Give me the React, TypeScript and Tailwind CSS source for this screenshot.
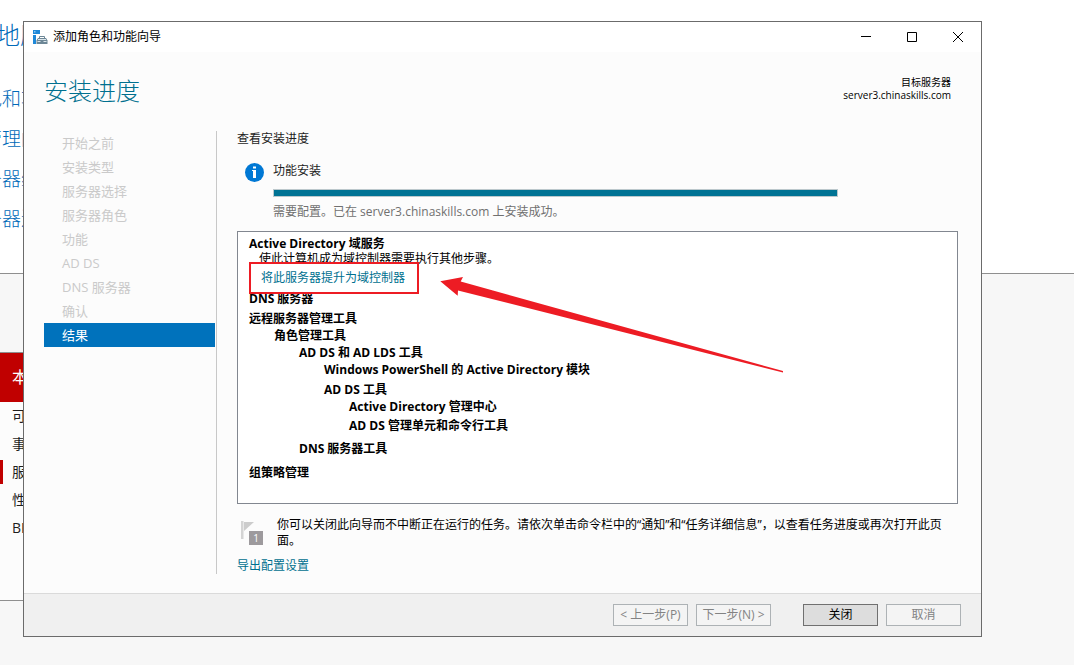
import React from "react";

const steps = [
  "开始之前",
  "安装类型",
  "服务器选择",
  "服务器角色",
  "功能",
  "AD DS",
  "DNS 服务器",
  "确认",
  "结果",
];

const currentStep = "结果";

const features = [
  { name: "DNS 服务器", className: "mt-1.5" },
  { name: "远程服务器管理工具", className: "mt-[5px]" },
  { name: "角色管理工具", className: "mt-0.5 pl-[25px]" },
  { name: "AD DS 和 AD LDS 工具", className: "mt-0.5 pl-[50px]" },
  { name: "Windows PowerShell 的 Active Directory 模块", className: "mt-0.5 pl-[75px]" },
  { name: "AD DS 工具", className: "mt-[5px] pl-[75px]" },
  { name: "Active Directory 管理中心", className: "mt-0.5 pl-[100px]" },
  { name: "AD DS 管理单元和命令行工具", className: "mt-1 pl-[100px]" },
  { name: "DNS 服务器工具", className: "mt-2 pl-[50px]" },
  { name: "组策略管理", className: "mt-[9px]" },
];

const quickStart = ["色和功能", "管理的", "务器组", "务器连"];

const tileRows = [
  { name: "可管理性", active: false },
  { name: "事件", active: false },
  { name: "服务", active: true },
  { name: "性能", active: false },
  { name: "BPA 结果", active: false },
];

function AppIcon() {
  return (
    <svg width="15" height="15" viewBox="0 0 15 15" aria-hidden="true">
      <path d="M0 0h7v4H0zM0 5h3v9H0z" fill="#1e88d8" />
      <path d="M1 1h1.500v1.500H1z" fill="#8cc8f2" />
      <path d="M6.500 8.500v-2h5v2" fill="none" stroke="#6d8796" />
      <path d="M5 8h8l1.500 2.500V14H3.500v-3.500z" fill="#6d8796" />
      <path d="M5 9.500h8M4.500 11.500h3M10.500 11.500h3" stroke="#dce6ec" />
    </svg>
  );
}

function InfoIcon() {
  return (
    <svg width="19" height="19" viewBox="0 0 19 19" aria-hidden="true">
      <circle cx="9.500" cy="9.500" r="9.500" fill="#0078d4" />
      <path d="M8 3.500h3v2H8zM7 7h4v8H8V8H7z" fill="#fff" />
    </svg>
  );
}

function FlagIcon() {
  return (
    <span className="relative mt-[3px] block h-[27px] w-[22px]">
      <svg width="13" height="19" viewBox="0 0 13 19" aria-hidden="true">
        <path d="M0 1h2.500v18H0z" fill="#d4d4d4" />
        <path d="M3 2h10L3 11z" fill="#cccccc" />
      </svg>
      <span className="absolute right-0 bottom-0.5 h-3.5 w-3.5 bg-[#9d9a9d] text-center text-[10px] leading-[14px] text-white">
        1
      </span>
    </span>
  );
}

function TitleBar() {
  const control = "flex h-[30px] w-[46px] items-center justify-center";
  return (
    <header className="flex h-[30px] items-center bg-white pl-[9px]">
      <AppIcon />
      <span className="ml-[5px] text-black">添加角色和功能向导</span>
      <div className="ml-auto flex">
        <button className={control} aria-label="最小化">
          <svg width="10" height="10" viewBox="0 0 10 10">
            <path d="M0 4.500h10" stroke="#000" />
          </svg>
        </button>
        <button className={control} aria-label="最大化">
          <svg width="10" height="10" viewBox="0 0 10 10">
            <path d="M.5.500h9v9h-9z" fill="none" stroke="#000" />
          </svg>
        </button>
        <button className={control} aria-label="关闭窗口">
          <svg width="10" height="10" viewBox="0 0 10 10">
            <path d="M0 0l10 10M10 0L0 10" stroke="#000" />
          </svg>
        </button>
      </div>
    </header>
  );
}

function ServerManager() {
  return (
    <div className="flex min-h-screen flex-col bg-[#f7f7f7]">
      <div className="h-[274px] border-b border-[#8f8f8f] bg-white pt-[19px] text-[19px] text-[#0069b8]">
        <p className="-ml-1 text-2xl leading-8 font-light">地服</p>
        <ul className="mt-7 -ml-[17px]">
          {quickStart.map((item) => (
            <li key={item} className="h-10 leading-10 font-light">
              {item}
            </li>
          ))}
        </ul>
      </div>
      <section className="mt-[78px] h-[249px] w-52 border-y border-[#8f8f8f] bg-[#fcfcfc]">
        <h2 className="bg-[#c00000] pl-3 text-base leading-[49px] text-white">本地服务器</h2>
        <ul>
          {tileRows.map((row) => (
            <li key={row.name} className="flex h-7 items-center text-sm text-[#1e1e1e]">
              <span className={row.active ? "h-6 w-[3px] bg-[#c00000]" : "w-[3px]"} />
              <span className="ml-[9px]">{row.name}</span>
            </li>
          ))}
        </ul>
      </section>
    </div>
  );
}

function ResultPanel() {
  return (
    <div className="relative mt-[11px] flex-1 border border-[#828790] bg-white pt-1 pl-[11px] leading-[15px] text-black">
      <h3 className="font-bold">Active Directory 域服务</h3>
      <p className="pl-2.5">使此计算机成为域控制器需要执行其他步骤。</p>
      <a href="#promote" className="mt-1 ml-3 block w-fit text-[#00708f]">
        将此服务器提升为域控制器
      </a>
      <ul className="font-bold">
        {features.map((feature) => (
          <li key={feature.name} className={feature.className}>
            {feature.name}
          </li>
        ))}
      </ul>
      {/* highlight around the promote link, with the arrow pointing at it */}
      <div className="absolute top-[30px] left-[11px] h-8 w-[170px] border-2 border-[#ed1c24]" />
      <svg
        className="absolute top-10 left-[200px]"
        width="348"
        height="104"
        viewBox="0 0 348 104"
        aria-hidden="true"
      >
        <path d="M2.300 9.300L25 5l-2.300 4.500L345 99v1.500L20 18.500l-.3 5.200z" fill="#ed1c24" />
      </svg>
    </div>
  );
}

function Footer() {
  const disabled = "h-[22px] w-[75px] border border-[#adb2b5] bg-[#f4f4f4] text-[#838383]";
  return (
    <footer className="flex h-[43px] items-center justify-end gap-2 border-t border-[#dadada] bg-[#f0f0f0] pr-5">
      <button className={disabled} disabled>
        &lt; 上一步(P)
      </button>
      <button className={disabled} disabled>
        下一步(N) &gt;
      </button>
      <button className="ml-6 h-[22px] w-[75px] border border-[#707070] bg-[#dddddd] text-black">
        关闭
      </button>
      <button className={disabled} disabled>
        取消
      </button>
    </footer>
  );
}

function Wizard() {
  return (
    <div
      role="dialog"
      aria-label="添加角色和功能向导"
      className="absolute top-[21px] right-[92px] bottom-7 left-[23px] flex flex-col border border-[#6b6b6b] bg-[#fcfcfc] text-xs"
    >
      <TitleBar />
      <div className="flex h-[79px] items-start justify-between pr-[30px] pl-5">
        <h1 className="pt-[23px] text-2xl leading-8 font-light text-[#00708f]">安装进度</h1>
        <p className="pt-6 text-right text-[10px] leading-[13px] text-black">
          目标服务器
          <br />
          server3.chinaskills.com
        </p>
      </div>
      <div className="flex flex-1 pr-[23px] pb-[19px] pl-5">
        <nav className="w-[173px] shrink-0 border-r border-[#c8c8c8] pr-px">
          <ol className="text-[13px] leading-6">
            {steps.map((step) => (
              <li
                key={step}
                className={
                  step === currentStep
                    ? "bg-[#0072bc] pl-[18px] text-white"
                    : "pl-[18px] text-[#cacaca]"
                }
              >
                {step}
              </li>
            ))}
          </ol>
        </nav>
        <main className="ml-5 flex flex-1 flex-col leading-4 text-[#1e1e1e]">
          <h2>查看安装进度</h2>
          <div className="mt-4 flex pl-2">
            <InfoIcon />
            <div className="mr-[120px] ml-[9px] flex-1">
              <p>功能安装</p>
              <div
                role="progressbar"
                aria-valuenow={100}
                className="mt-[10px] h-2 border border-[#bcc8cc] bg-[#007394]"
              />
              <p className="mt-[7px] text-[#707070]">
                需要配置。已在 server3.chinaskills.com 上安装成功。
              </p>
            </div>
          </div>
          <ResultPanel />
          <div className="mt-[13px] flex h-8 pl-1 text-black">
            <FlagIcon />
            <p className="ml-3.5 flex-1 pr-3">
              你可以关闭此向导而不中断正在运行的任务。请依次单击命令栏中的“通知”和“任务详细信息”，以查看任务进度或再次打开此页面。
            </p>
          </div>
          <a href="#export" className="mt-[9px] w-fit text-[#00708f]">
            导出配置设置
          </a>
        </main>
      </div>
      <Footer />
    </div>
  );
}

export default function App() {
  return (
    <div
      lang="zh-CN"
      className="relative min-h-screen overflow-hidden font-['Open_Sans','Noto_Sans_CJK_SC',sans-serif]"
    >
      <ServerManager />
      <Wizard />
    </div>
  );
}
